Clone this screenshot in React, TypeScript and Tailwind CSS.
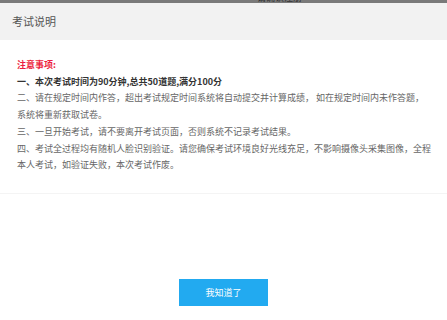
export default function App() {
  const font = { fontFamily: '"Noto Sans CJK SC", "Microsoft YaHei", sans-serif' }

  return (
    <div className="w-[447px] h-[320px] bg-white overflow-hidden" style={font}>
      <div className="relative h-[3px] bg-[#7a7a7a] overflow-hidden">
        <span className="absolute left-[257px] -top-[7px] text-[9px] leading-[9px] text-[#333]">请确认注册</span>
      </div>

      <div className="h-[37px] bg-[#f2f2f2] flex items-center pl-[12px]">
        <h1 className="text-[11px] text-[#555]">考试说明</h1>
      </div>

      <div className="pl-[17px] pr-[14px] pt-[17px] pb-[19px] border-b border-[#f4f4f4] text-[9px] leading-[16.7px] text-[#666]">
        <p className="font-bold text-[#ec1f40]">注意事项:</p>
        <p className="font-bold text-[#333]">一、本次考试时间为90分钟,总共50道题,满分100分</p>
        <p>二、请在规定时间内作答，超出考试规定时间系统将自动提交并计算成绩， 如在规定时间内未作答题，系统将重新获取试卷。</p>
        <p>三、一旦开始考试，请不要离开考试页面，否则系统不记录考试结果。</p>
        <p>四、考试全过程均有随机人脸识别验证。请您确保考试环境良好光线充足，不影响摄像头采集图像，全程本人考试，如验证失败，本次考试作废。</p>
      </div>

      <div className="flex justify-center pt-[85px]">
        <button className="w-[89px] h-[27px] bg-[#22aaf0] text-white text-[9px] flex items-center justify-center">
          我知道了
        </button>
      </div>
    </div>
  )
}
